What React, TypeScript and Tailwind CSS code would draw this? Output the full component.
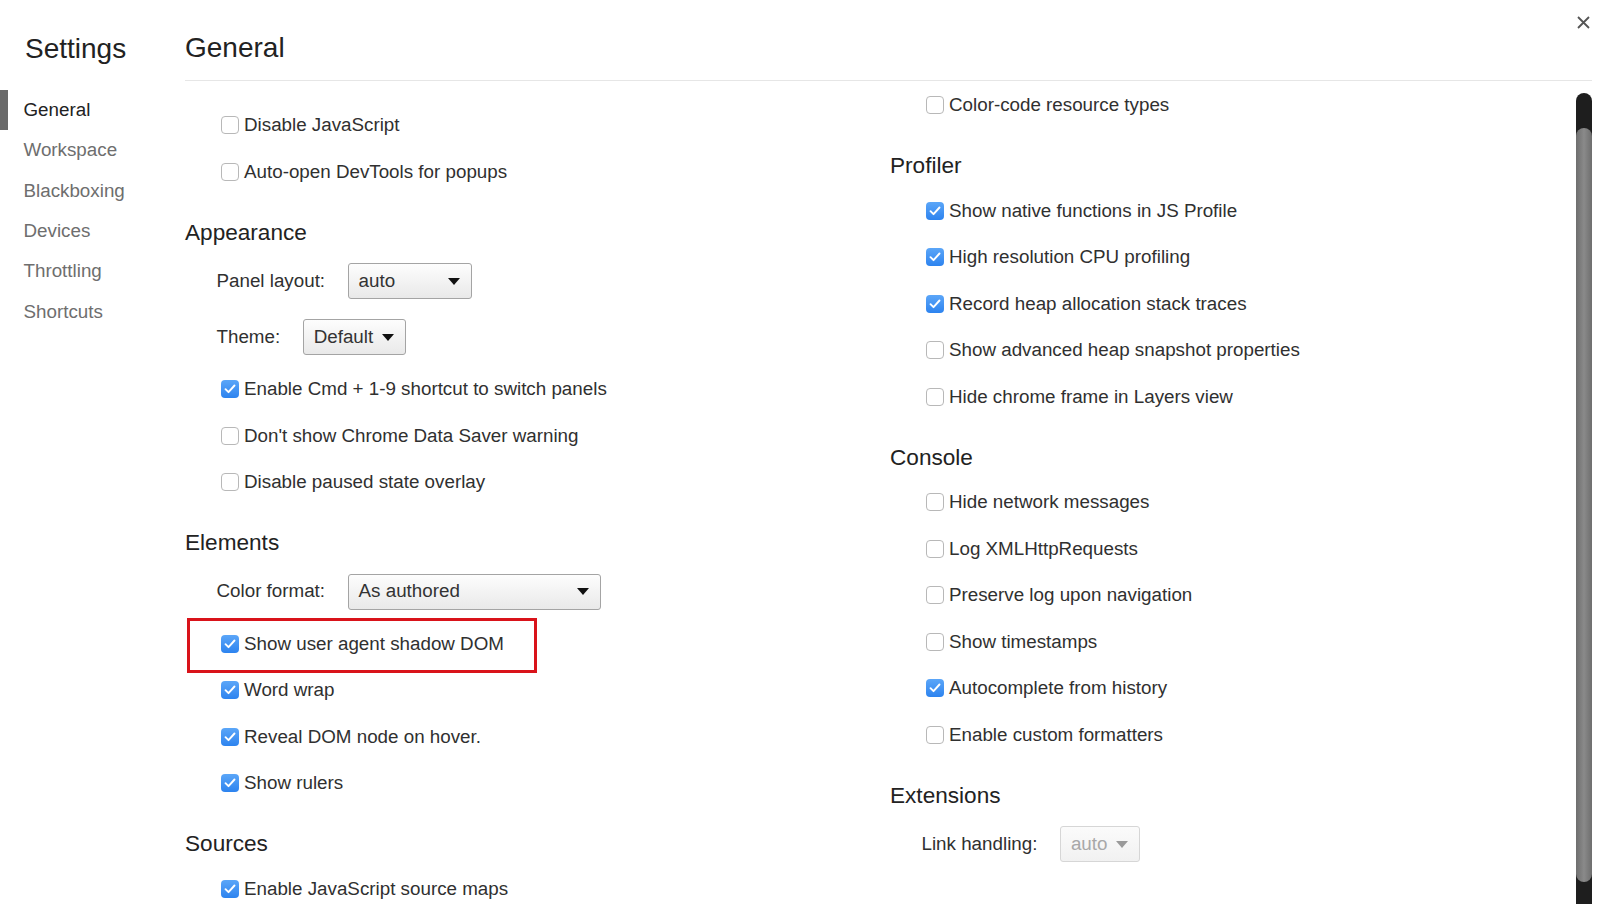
import type { ReactNode } from 'react';

type Item =
  | { kind: 'check'; label: string; checked?: boolean; highlight?: boolean }
  | { kind: 'heading'; label: string }
  | { kind: 'select'; label: string; value: string; width: string; disabled?: boolean };

const navItems = ['General', 'Workspace', 'Blackboxing', 'Devices', 'Throttling', 'Shortcuts'];

const leftColumn: Item[] = [
  { kind: 'check', label: 'Disable JavaScript' },
  { kind: 'check', label: 'Auto-open DevTools for popups' },
  { kind: 'heading', label: 'Appearance' },
  { kind: 'select', label: 'Panel layout:', value: 'auto', width: 'w-[124px]' },
  { kind: 'select', label: 'Theme:', value: 'Default', width: 'w-[103px]' },
  { kind: 'check', label: 'Enable Cmd + 1-9 shortcut to switch panels', checked: true },
  { kind: 'check', label: "Don't show Chrome Data Saver warning" },
  { kind: 'check', label: 'Disable paused state overlay' },
  { kind: 'heading', label: 'Elements' },
  { kind: 'select', label: 'Color format:', value: 'As authored', width: 'w-[253px]' },
  { kind: 'check', label: 'Show user agent shadow DOM', checked: true, highlight: true },
  { kind: 'check', label: 'Word wrap', checked: true },
  { kind: 'check', label: 'Reveal DOM node on hover.', checked: true },
  { kind: 'check', label: 'Show rulers', checked: true },
  { kind: 'heading', label: 'Sources' },
  { kind: 'check', label: 'Enable JavaScript source maps', checked: true },
];

const rightColumn: Item[] = [
  { kind: 'check', label: 'Color-code resource types' },
  { kind: 'heading', label: 'Profiler' },
  { kind: 'check', label: 'Show native functions in JS Profile', checked: true },
  { kind: 'check', label: 'High resolution CPU profiling', checked: true },
  { kind: 'check', label: 'Record heap allocation stack traces', checked: true },
  { kind: 'check', label: 'Show advanced heap snapshot properties' },
  { kind: 'check', label: 'Hide chrome frame in Layers view' },
  { kind: 'heading', label: 'Console' },
  { kind: 'check', label: 'Hide network messages' },
  { kind: 'check', label: 'Log XMLHttpRequests' },
  { kind: 'check', label: 'Preserve log upon navigation' },
  { kind: 'check', label: 'Show timestamps' },
  { kind: 'check', label: 'Autocomplete from history', checked: true },
  { kind: 'check', label: 'Enable custom formatters' },
  { kind: 'heading', label: 'Extensions' },
  { kind: 'select', label: 'Link handling:', value: 'auto', width: 'w-[80px]', disabled: true },
];

function Checkbox({ checked }: { checked?: boolean }) {
  if (checked) {
    return (
      <span className="flex h-[18px] w-[18px] shrink-0 items-center justify-center rounded-[4px] bg-gradient-to-b from-[#5ba6f8] to-[#2c83ef]">
        <svg width="12" height="10" viewBox="0 0 12 10" fill="none">
          <path d="M1.5 5.2 L4.5 8.2 L10.5 1.5" stroke="white" strokeWidth="1.9" strokeLinecap="round" strokeLinejoin="round" />
        </svg>
      </span>
    );
  }

  return <span className="h-[18px] w-[18px] shrink-0 rounded-[4px] border border-[#b8b8b8] bg-white" />;
}

function Select({ value, width, disabled }: { value: string; width: string; disabled?: boolean }) {
  return (
    <div
      className={`flex h-[36px] items-center justify-between rounded-[3px] border pl-[10px] pr-[11px] ${width} ${
        disabled
          ? 'border-[#d6d6d6] bg-gradient-to-b from-[#fbfbfb] to-[#f1f1f1] text-[#a8a8a8]'
          : 'border-[#a4a4a4] bg-gradient-to-b from-[#fdfdfd] to-[#e9e9e9] text-[#333]'
      }`}
    >
      <span>{value}</span>
      <svg width="12" height="7" viewBox="0 0 12 7">
        <path d="M0 0 H12 L6 7 Z" fill={disabled ? '#9a9a9a' : '#111'} />
      </svg>
    </div>
  );
}

function Row({ item }: { item: Item }): ReactNode {
  if (item.kind === 'heading') {
    return <div className="pb-[8px] pt-[24.5px] text-[22.6px] leading-[26.5px] text-[#222]">{item.label}</div>;
  }

  if (item.kind === 'select') {
    return (
      <div className="flex h-[56px] items-start gap-[22.5px] pl-[31.5px] pt-[9px]">
        <span className="flex h-[36px] items-center">{item.label}</span>
        <Select value={item.value} width={item.width} disabled={item.disabled} />
      </div>
    );
  }

  return (
    <div className="relative flex h-[46.5px] items-center gap-[5.5px] pl-[35.5px]">
      <Checkbox checked={item.checked} />
      <span>{item.label}</span>
      {item.highlight && (
        <div className="absolute left-[2px] top-[-2.5px] h-[55px] w-[350px] border-[3px] border-[#d9131a]" />
      )}
    </div>
  );
}

export default function App() {
  return (
    <div className="relative h-[904px] w-[1600px] overflow-hidden bg-white font-['Liberation_Sans',Arial,sans-serif] text-[18.8px] text-[#303030]">
      <div className="flex">
        <aside className="w-[185px] shrink-0">
          <div className="pl-[25px] pt-[31px] text-[28px] leading-[36px] text-[#222]">Settings</div>
          <nav className="mt-[23px]">
            {navItems.map((item, index) => (
              <div
                key={item}
                className={`flex h-[40.3px] items-center ${
                  index === 0 ? 'border-l-[8px] border-[#6a6a6a] pl-[15.5px] text-[#222]' : 'pl-[23.5px] text-[#6e6e6e]'
                }`}
              >
                {item}
              </div>
            ))}
          </nav>
        </aside>

        <main className="mr-[8px] flex-1">
          <div className="h-[81px] border-b border-[#e6e6e6] pt-[30px] text-[28px] leading-[36px] text-[#222]">General</div>
          <div className="flex">
            <div className="w-[705px] shrink-0 pt-[21px]">
              {leftColumn.map((item) => (
                <Row key={item.label} item={item} />
              ))}
            </div>
            <div className="flex-1 pt-[1px]">
              {rightColumn.map((item) => (
                <Row key={item.label} item={item} />
              ))}
            </div>
          </div>
        </main>
      </div>

      <button type="button" className="absolute left-[1577px] top-[16px] p-0" aria-label="Close">
        <svg width="13" height="13" viewBox="0 0 13 13">
          <path d="M1 1 L12 12 M12 1 L1 12" stroke="#555" strokeWidth="1.8" />
        </svg>
      </button>

      <div className="absolute left-[1576px] top-[93px] h-[811px] w-[16px] rounded-t-[8px] bg-[#1e1e1e]">
        <div className="mt-[35px] h-[754px] rounded-[8px] bg-gradient-to-r from-[#6e6e6e] via-[#8a8a8a] to-[#6e6e6e]" />
      </div>
    </div>
  );
}
